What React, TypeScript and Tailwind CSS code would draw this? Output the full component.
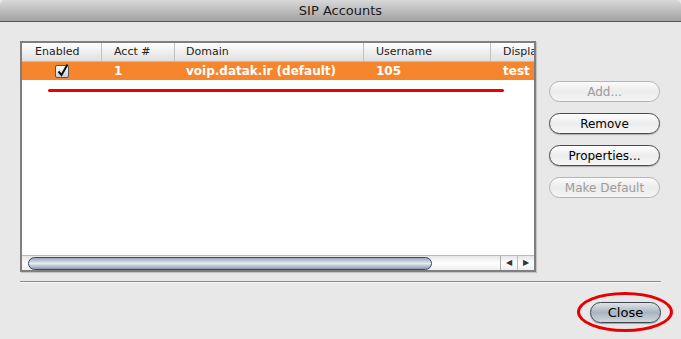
import React from "react";

const font = { fontFamily: '"Lucida Grande", "DejaVu Sans", "Noto Sans", sans-serif' };

function AquaButton({ label, disabled, w = "w-[111px]" }: { label: string; disabled?: boolean; w?: string }) {
  return (
    <div
      className={`${w} h-[21px] rounded-full flex items-center justify-center text-[12px] ${
        disabled
          ? "border border-[#b4b4b4] text-[#9c9c9c] bg-gradient-to-b from-[#fbfbfb] via-[#ececec] to-[#f4f4f4]"
          : "border border-[#4a4a4a] text-black bg-gradient-to-b from-[#ffffff] via-[#ececec] to-[#f7f7f7] shadow-[0_1px_1px_rgba(0,0,0,0.25)]"
      }`}
    >
      {label}
    </div>
  );
}

export default function App() {
  const cols = [
    { label: "Enabled", w: "w-[80px]", pl: "pl-[13px]" },
    { label: "Acct #", w: "w-[73px]", pl: "pl-[12px]" },
    { label: "Domain", w: "w-[189px]", pl: "pl-[11px]" },
    { label: "Username", w: "w-[127px]", pl: "pl-[12px]" },
    { label: "Displa", w: "flex-1", pl: "pl-[12px]" },
  ];
  return (
    <div className="w-[681px] h-[339px] bg-[#e8e8e8] flex flex-col relative overflow-hidden" style={font}>
      {/* title bar */}
      <div className="h-[22px] shrink-0 bg-gradient-to-b from-[#d8d8d8] via-[#bdbdbd] to-[#a2a2a2] border-b border-[#555] flex items-center justify-center text-[13px] text-[#1a1a1a] rounded-t-[5px]">
        SIP Accounts
      </div>

      <div className="flex pl-[20px] pt-[19px]">
        {/* table */}
        <div className="w-[516px] h-[231px] border-2 border-[#7f7f7f] bg-white flex flex-col shadow-[1px_1px_1px_rgba(0,0,0,0.15)]">
          <div className="h-[19px] shrink-0 flex bg-gradient-to-b from-[#ffffff] via-[#efefef] to-[#e0e0e0] border-b border-[#bdbdbd] text-[11px] text-[#222]">
            {cols.map((c, i) => (
              <div
                key={c.label}
                className={`${c.w} ${c.pl} flex items-center whitespace-nowrap overflow-hidden ${i < cols.length - 1 ? "border-r border-[#c2c2c2]" : ""}`}
              >
                {c.label}
              </div>
            ))}
          </div>
          <div className="h-[18px] shrink-0 flex bg-[#f5862e] text-white font-bold text-[12px]">
            <div className="w-[80px] flex items-center justify-center">
              <div className="w-[14px] h-[13px] rounded-[2px] border border-[#555] bg-gradient-to-b from-[#ffffff] to-[#c8d0dc] flex items-center justify-center">
                <svg width="13" height="13" viewBox="0 0 13 13" className="overflow-visible">
                  <path d="M2.5 6.5 L5.5 10 L11.5 -0.5" stroke="#111" strokeWidth="2" fill="none" />
                </svg>
              </div>
            </div>
            <div className="w-[73px] pl-[12px] flex items-center">1</div>
            <div className="w-[189px] pl-[11px] flex items-center whitespace-nowrap">voip.datak.ir (default)</div>
            <div className="w-[127px] pl-[12px] flex items-center">105</div>
            <div className="flex-1 pl-[12px] flex items-center">test</div>
          </div>
          <div className="flex-1" />
          {/* scrollbar */}
          <div className="h-[15px] shrink-0 flex items-center bg-gradient-to-b from-[#e6e6e6] via-[#ffffff] to-[#eeeeee] border-t border-[#bbb]">
            <div className="w-[6px]" />
            <div className="w-[404px] h-[13px] rounded-full border border-[#3c4a5c] bg-gradient-to-b from-[#9aa6b6] via-[#e4ebf3] to-[#8c9aac]" />
            <div className="flex-1" />
            <div className="w-[34px] h-full flex items-center border-l border-[#aaa]">
              <div className="w-[16px] flex justify-center text-[8px] text-[#333]">◀</div>
              <div className="w-px h-full bg-[#bbb]" />
              <div className="w-[16px] flex justify-center text-[8px] text-[#333]">▶</div>
            </div>
          </div>
        </div>

        {/* buttons */}
        <div className="flex flex-col pl-[13px] pt-[40px] gap-[11px]">
          <AquaButton label="Add..." disabled />
          <AquaButton label="Remove" />
          <AquaButton label="Properties..." />
          <AquaButton label="Make Default" disabled />
        </div>
      </div>

      {/* separator */}
      <div className="mx-[20px] mt-[9px] h-px bg-[#8a8a8a] w-[641px]" />
      <div className="mx-[20px] h-px bg-[#f8f8f8] w-[641px]" />

      <div className="flex justify-end pr-[20px] pt-[19px]">
        <div className="w-[71px] h-[21px] rounded-full border border-[#3f4650] bg-gradient-to-b from-[#dfe4ea] via-[#aab4c0] to-[#cfd6de] flex items-center justify-center text-[13px] text-black shadow-[0_1px_1px_rgba(0,0,0,0.3)]">
          Close
        </div>
      </div>

      {/* red annotations */}
      <div className="absolute left-[48px] top-[89px] w-[456px] h-[3px] bg-[#ee0000] rounded-full" />
      <div className="absolute left-[577px] top-[292px] w-[96px] h-[40px] rounded-[50%] border-[3px] border-[#e60000]" />
    </div>
  );
}
